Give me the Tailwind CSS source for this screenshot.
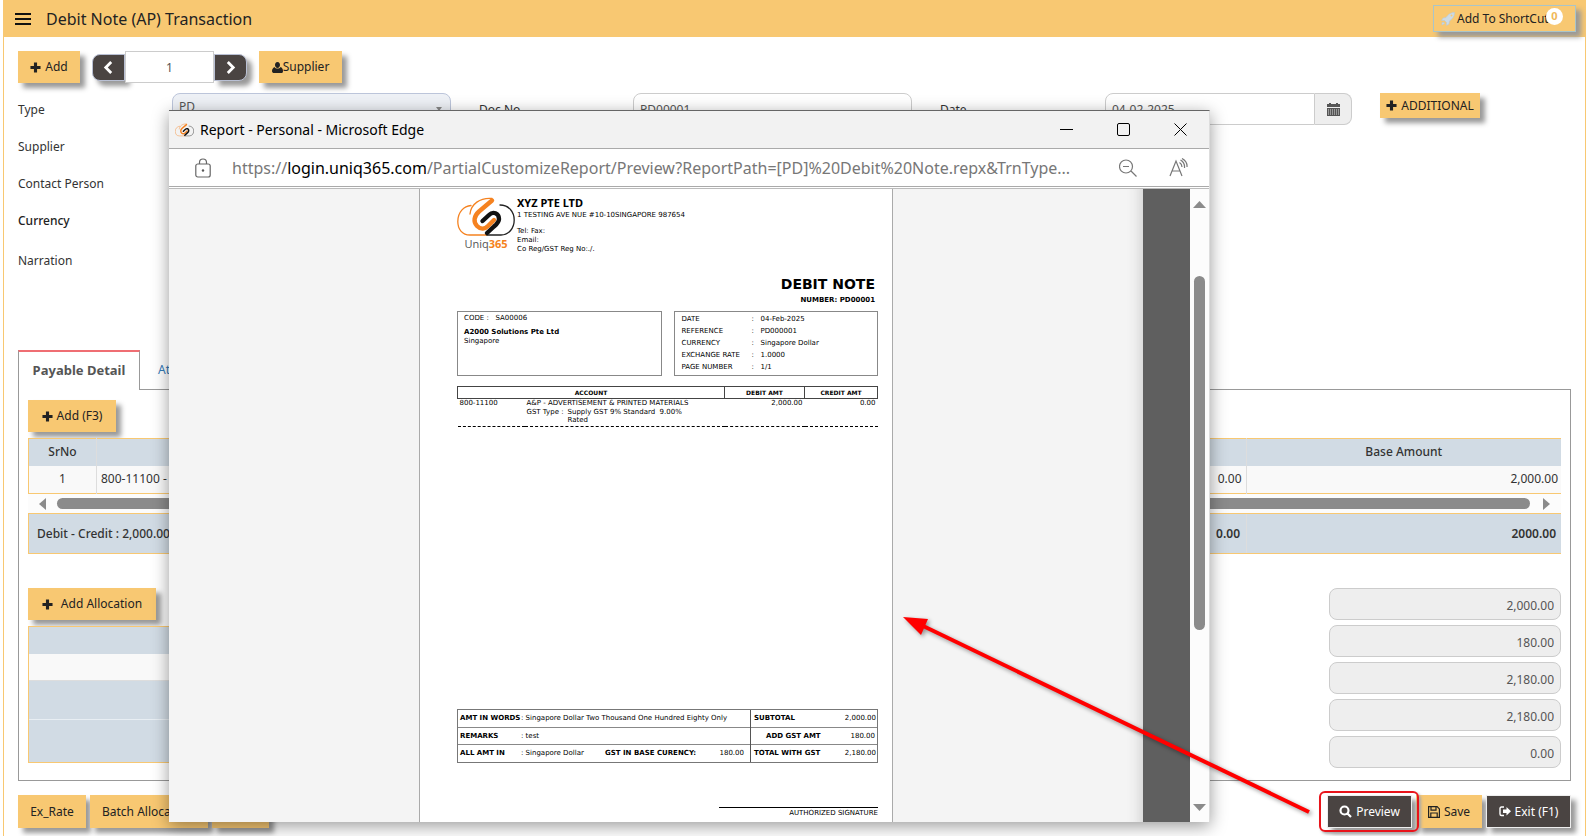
<!DOCTYPE html>
<html lang="en">
<head>
    <meta charset="UTF-8">
    <meta name="viewport" content="width=device-width, initial-scale=1.0">
    <title>Debit Note (AP) Transaction</title>
    <script src="https://cdn.jsdelivr.net/npm/@tailwindcss/browser@4"></script>
</head>
<body class="bg-white font-['Noto_Sans',sans-serif] text-[12px] text-[#333]">
    <!-- Shared icons -->
    <svg class="hidden" aria-hidden="true">
        <symbol id="plus" viewBox="0 0 12 12"><path fill="currentColor" d="M4.300.5h3.400v3.800h3.800v3.400h-3.800v3.800h-3.400v-3.800h-3.800v-3.400h3.800z"/></symbol>
        <symbol id="logo" viewBox="0 0 58 40">
            <g fill="none" stroke-linecap="round" stroke-linejoin="round">
                <path stroke="#f58220" stroke-width="1.300" d="M30 38H13C5 38 .8 32 .8 24.500C.8 15 7 9 14 8.500M13 17C14 7 23 .5 35 1.500"/>
                <path stroke="#222" stroke-width="1.300" d="M43 8C52 8 57.200 15 57.200 23S52 38 44 38H30"/>
                <path stroke="#f58220" stroke-width="4.400" d="M35 3.500L22 14.500C17 19 16 25 20 29C24 33 28 32 31 29L37 23"/>
                <path stroke="#111" stroke-width="4.400" d="M25.500 24L32 18C36 14 42 16 42 22C42 25 40 27 37 29.500L30 36"/>
            </g>
        </symbol>
    </svg>

    <div class="relative min-h-screen overflow-hidden pl-[3px] pr-1">
        <div class="min-h-screen border-x border-[#f8c872]">
            <header class="flex h-[37px] items-center bg-[#f8c872] pl-[11px] pr-[9px] text-[#222]">
                <button aria-label="Menu" class="flex w-4 flex-col gap-[3px]">
                    <span class="h-[2px] w-full bg-[#111]"></span>
                    <span class="h-[2px] w-full bg-[#111]"></span>
                    <span class="h-[2px] w-full bg-[#111]"></span>
                </button>
                <h1 class="ml-[15px] text-[16px]">Debit Note (AP) Transaction</h1>
                <button class="relative ml-auto flex h-[27px] w-[143px] items-center border border-[#a9c5c9] pl-[7px] shadow-[5px_5px_5px_#999]">
                    <svg class="mr-[2px] size-[14px]" viewBox="0 0 14 14"><path fill="#cddbe6" stroke="#b5c9d8" stroke-width=".6" d="M13.500.5C9 .5 7 3 5 5.500L2 6L.5 8.500L3.500 8.500L5.500 10.500L5.500 13.500L8 12L8.500 9C11 7 13.500 5 13.500.5zM1 10.500L3 10.500L3.500 11.500L1 13z"/><circle cx="10.500" cy="3.500" r="1" fill="#f8c872"/></svg>
                    Add To ShortCut
                    <span class="absolute right-[12px] top-[2px] flex size-[17px] items-center justify-center rounded-full bg-white text-[11px] font-bold text-[#f0b858]">0</span>
                </button>
            </header>

            <main class="px-[14px] pt-[14px]">
                <div class="flex items-center text-[#222]">
                    <button class="flex h-8 w-[62px] items-center justify-center gap-1 bg-[#f8c872] shadow-[5px_5px_5px_#999]"><svg class="size-[11px]"><use href="#plus"/></svg>Add</button>
                    <button aria-label="Previous" class="ml-3 flex h-[27px] w-[33px] items-center justify-center rounded-l-[8px] border border-[#b9c0d4] bg-[#4a4442] shadow-[5px_5px_5px_#999]"><svg class="size-[13px]" viewBox="0 0 12 12"><path fill="none" stroke="#fff" stroke-width="2.600" d="M8.500 1L3.500 6L8.500 11"/></svg></button>
                    <input aria-label="Page" value="1" class="relative h-8 w-[89px] border border-[#ccc] bg-white text-center text-[#555]">
                    <button aria-label="Next" class="flex h-[27px] w-[33px] items-center justify-center rounded-r-[8px] border border-[#b9c0d4] bg-[#4a4442] shadow-[5px_5px_5px_#999]"><svg class="size-[13px]" viewBox="0 0 12 12"><path fill="none" stroke="#fff" stroke-width="2.600" d="M3.500 1L8.500 6L3.500 11"/></svg></button>
                    <button class="ml-3 flex h-8 w-[83px] items-center justify-center bg-[#f8c872] shadow-[5px_5px_5px_#999]"><svg class="size-[11px]" viewBox="0 0 11 11"><path fill="#222" d="M5.500 0C7.300 0 8 1.500 8 3S7 6 5.500 6S3 4.500 3 3S3.700 0 5.500 0zM2.500 5C3.500 7 7.500 7 8.500 5C10 5.500 11 7 11 9S10 11 9 11H2C1 11 0 10.500 0 9S1 5.500 2.500 5z"/></svg>Supplier</button>
                </div>

                <div class="mt-[10px] flex h-8 items-center">
                    <label for="type" class="w-[154px] pt-[2px]">Type</label>
                    <select id="type" class="h-8 w-[279px] appearance-none rounded-[8px] border border-[#bcc5da] bg-[#eef1f6] px-[6px] pb-[4px] text-[#555]"><option>PD</option></select>
                    <svg class="-ml-4 size-2" viewBox="0 0 8 8"><path fill="#888" d="M1 2h6L4 6z"/></svg>
                    <label for="doc" class="ml-9 w-[154px] pt-[2px]">Doc No</label>
                    <input id="doc" value="PD00001" class="h-8 w-[279px] rounded-[8px] border border-[#ccc] px-[6px] text-[#555]">
                    <label for="date" class="ml-7 w-[165px] pt-[2px]">Date</label>
                    <input id="date" value="04-02-2025" class="h-8 w-[210px] rounded-l-[8px] border border-[#ccc] px-[6px] text-[#555]">
                    <button aria-label="Pick date" class="flex h-8 w-[37px] items-center justify-center rounded-r-[8px] border border-l-0 border-[#ccc] bg-[#eee]"><svg class="size-[13px]" viewBox="0 0 13 13"><path fill="#555" d="M0 1h2V0h2v1h5V0h2v1h2v3H0zM0 5h13v8H0z"/><path stroke="#ddd" stroke-dasharray="1 1" d="M1 7h11M1 9h11M1 11h11"/></svg></button>
                    <button class="ml-7 flex h-[25px] w-[100px] items-center justify-center gap-1 self-start bg-[#f8c872] text-[#222] shadow-[5px_5px_5px_#999]"><svg class="size-[11px]"><use href="#plus"/></svg>ADDITIONAL</button>
                </div>
                <div class="mt-[14px] flex flex-col gap-[21px]">
                    <p class="leading-4">Supplier</p>
                    <p class="leading-4">Contact Person</p>
                    <p class="leading-4 font-medium text-[#222]">Currency</p>
                    <p class="mt-[3px] leading-4">Narration</p>
                </div>

                <nav class="mt-[81px] flex h-[39px] items-stretch">
                    <a href="#" class="relative z-1 -mb-px flex w-[122px] items-center justify-center border-x border-t-2 border-x-[#999] border-t-[#ef6e73] bg-white text-[13px] font-bold text-[#555]">Payable Detail</a>
                    <a href="#" class="flex items-center px-[18px] text-[#337ab7]">Attachment</a>
                </nav>
                <section class="border border-[#999] px-[9px] pb-3 pt-[10px]">
                    <button class="flex h-8 w-[88px] items-center justify-center gap-1 bg-[#f8c872] text-[#222] shadow-[5px_5px_5px_#999]"><svg class="size-[11px]"><use href="#plus"/></svg>Add (F3)</button>
                    <table class="mt-[6px] w-full table-fixed border-collapse border border-r-0 border-[#f8c872]">
                        <colgroup><col class="w-[68px]"><col><col class="w-[120px]"><col class="w-[315px]"></colgroup>
                        <thead>
                            <tr class="h-[27px] bg-[#d1dbe4] font-medium">
                                <th class="border-r border-[#ddd] font-medium">SrNo</th><th></th><th class="border-r border-[#ddd]"></th><th class="font-medium">Base Amount</th>
                            </tr>
                        </thead>
                        <tbody>
                            <tr class="h-7 bg-[#f9f9f9]">
                                <td class="border-r border-[#ddd] text-center">1</td>
                                <td class="px-1">800-11100 - A&amp;P</td>
                                <td class="border-r border-[#ddd] pr-1 text-right">0.00</td>
                                <td class="pr-[3px] text-right">2,000.00</td>
                            </tr>
                        </tbody>
                    </table>
                    <div class="flex h-[19px] items-center bg-[#fcfcfc] px-[11px]">
                        <svg class="h-3 w-[7px]" viewBox="0 0 7 12"><path fill="#8b8b8b" d="M7 0v12L0 6z"/></svg>
                        <div class="ml-[11px] mr-[13px] h-[11px] flex-1 rounded-full bg-[#8b8b8b]"></div>
                        <svg class="h-3 w-[7px]" viewBox="0 0 7 12"><path fill="#8b8b8b" d="M0 0v12L7 6z"/></svg>
                    </div>
                    <div class="flex h-[41px] items-stretch border border-r-0 border-[#f8c872] bg-[#d1dbe4] font-semibold">
                        <div class="flex flex-1 items-center pl-2 font-medium">Debit - Credit : 2,000.00</div>
                        <div class="flex w-[120px] items-center justify-end border-r border-[#ddd] pr-[6px]">0.00</div>
                        <div class="flex w-[314px] items-center justify-end pr-[5px]">2000.00</div>
                    </div>

                    <div class="mt-[34px] flex justify-between">
                        <div class="flex-1">
                            <button class="flex h-8 w-[128px] items-center justify-center gap-2 bg-[#f8c872] text-[#222] shadow-[5px_5px_5px_#999]"><svg class="size-[11px]"><use href="#plus"/></svg>Add Allocation</button>
                            <div class="mt-[6px] w-[800px] border border-[#f8c872] bg-[#d1dbe4]">
                                <div class="h-[27px]"></div>
                                <div class="h-[27px] border-b border-[#ddd] bg-[#f9f9f9]"></div>
                                <div class="h-[39px] border-b border-[#e8eef3]"></div>
                                <div class="h-[42px]"></div>
                            </div>
                        </div>
                        <div class="flex flex-col gap-[5px]" id="totals"></div>
                    </div>
                </section>

                <footer class="mt-[14px] flex items-center text-[#222]">
                    <button class="h-[33px] w-[68px] bg-[#f8c872] shadow-[5px_5px_5px_#999]">Ex_Rate</button>
                    <button class="ml-1 h-[33px] w-[118px] bg-[#f8c872] pl-3 text-left shadow-[5px_5px_5px_#999]">Batch Allocation</button>
                    <button class="ml-1 h-[33px] w-[57px] bg-[#f8c872] shadow-[5px_5px_5px_#999]">Print</button>
                    <button class="relative ml-auto flex h-[33px] w-[85px] items-center justify-center gap-1 border border-[#eee] bg-[#4a4442] text-white shadow-[5px_5px_5px_#999]">
                        <svg class="size-[13px]" viewBox="0 0 13 13"><path fill="none" stroke="#fff" stroke-width="2.200" d="M8.500 8.500L12 12M9.500 5.500a4 4 0 1 1-8 0a4 4 0 1 1 8 0z"/></svg>Preview
                        <span class="absolute -left-[9px] -top-[5px] h-[41px] w-[100px] rounded-[6px] border-2 border-[#e8141b] shadow-[2px_2px_3px_#aaa]"></span>
                    </button>
                    <button class="ml-1 flex h-[33px] w-[66px] items-center justify-center gap-1 bg-[#f8c872] shadow-[5px_5px_5px_#999]"><svg class="size-3" viewBox="0 0 12 12"><path fill="none" stroke="#222" stroke-width="1.200" d="M.6.600h8.500l2.300 2.300v8.500H.6zM3 .6v3.500h5V.6M2.800 11.400V7h6.400v4.400"/></svg>Save</button>
                    <button class="ml-1 flex h-[33px] w-[85px] items-center justify-center gap-1 border border-[#eee] bg-[#4a4442] text-white shadow-[5px_5px_5px_#999]"><svg class="h-[11px] w-3" viewBox="0 0 12 11"><path fill="none" stroke="#fff" stroke-width="1.400" d="M5 1H2.500Q1 1 1 2.500V8Q1 9.500 2.500 9.500H5"/><path fill="#fff" d="M4 3.500h3.500V1L12 5.300L7.500 9.500V7H4z"/></svg>Exit (F1)</button>
                </footer>
            </main>
        </div>

        <!-- Report preview window -->
        <div class="absolute left-[169px] top-[110px] flex h-[712px] w-[1041px] flex-col border-r border-t border-r-[#ddd] border-t-[#666] bg-white text-black shadow-[0_4px_16px_rgba(0,0,0,0.4)]">
            <div class="flex h-[38px] shrink-0 items-center border-b border-[#aaa] bg-[#f2f2f2] pl-[6px] pr-[22px]">
                <svg class="h-4 w-[19px]"><use href="#logo"/></svg>
                <span class="ml-[6px] text-[14px]">Report - Personal - Microsoft Edge</span>
                <button aria-label="Minimize" class="ml-auto"><svg class="size-[13px]" viewBox="0 0 13 13"><path stroke="#000" d="M0 6.500h13"/></svg></button>
                <button aria-label="Maximize" class="ml-11"><svg class="size-[13px]" viewBox="0 0 13 13"><rect x=".5" y=".5" width="12" height="12" rx="1.500" fill="none" stroke="#000"/></svg></button>
                <button aria-label="Close" class="ml-11"><svg class="size-[13px]" viewBox="0 0 13 13"><path stroke="#000" d="M.5.5l12 12M12.500.5l-12 12"/></svg></button>
            </div>
            <div class="flex h-[38px] shrink-0 items-center border-b border-[#aaa] pl-[26px] pr-[21px] text-[#777]">
                <svg class="h-5 w-4" viewBox="0 0 16 20"><g fill="none" stroke="#666" stroke-width="1.200"><rect x=".8" y="6" width="14.400" height="13" rx="2"/><path d="M4.500 6V4.500a3.500 3.500 0 0 1 7 0V6"/></g><circle cx="8" cy="12.500" r="1.200" fill="#555"/></svg>
                <span class="ml-[21px] whitespace-nowrap text-[16px]">https://<span class="text-black">login.uniq365.com</span>/PartialCustomizeReport/Preview?ReportPath=[PD]%20Debit%20Note.repx&amp;TrnType...</span>
                <button aria-label="Zoom out" class="ml-auto"><svg class="size-[18px]" viewBox="0 0 18 18"><path fill="none" stroke="#777" stroke-width="1.200" d="M12 12l5.500 5.500M13.500 7.500a6.500 6.500 0 1 1-13 0a6.500 6.500 0 1 1 13 0zM4 7.500h6"/></svg></button>
                <button aria-label="Read aloud" class="ml-8"><svg class="size-[19px]" viewBox="0 0 19 19"><path fill="none" stroke="#777" stroke-width="1.200" d="M1 18L7 3L13 18M3 13h8M10.500 4.500Q13 6 13 9M11.500 2Q16 4.500 15.500 10M13 .5Q18.500 3.500 18 9"/></svg></button>
            </div>
            <div class="mt-px flex min-h-0 flex-1 border-t border-[#bbb]">
                <div class="flex-1 bg-[#f4f4f4] shadow-[inset_-16px_0_14px_-14px_#ccc]">
                    <article class="mx-auto flex h-full w-[474px] flex-col border-x border-[#aaa] bg-white pl-[37px] pr-[14px] pt-2 font-['DejaVu_Sans',sans-serif] text-[7px] leading-[9px]">
                        <div class="flex h-[72px] gap-[2px]">
                            <div class="w-[58px]">
                                <svg class="h-10 w-[58px]"><use href="#logo"/></svg>
                                <p class="text-center font-['Open_Sans',sans-serif] text-[11px] leading-[13px] text-[#555]">Uniq<b class="text-[#f58220]">365</b></p>
                            </div>
                            <div>
                                <p class="font-['Noto_Sans',sans-serif] text-[11px] font-bold leading-3">XYZ PTE LTD</p>
                                <p class="leading-3">1 TESTING AVE NUE #10-10SINGAPORE 987654</p>
                                <p class="mt-[6px]">Tel: Fax:</p>
                                <p>Email:</p>
                                <p>Co Reg/GST Reg No:./.</p>
                            </div>
                        </div>
                        <h2 class="mt-[6px] pr-[3px] text-right text-[14px] font-bold leading-[18px]">DEBIT NOTE</h2>
                        <p class="mt-[2px] pr-[3px] text-right font-bold leading-[10px]">NUMBER: PD00001</p>
                        <div class="mt-[6px] grid h-[65px] grid-cols-2 gap-3">
                            <div class="border border-[#888] px-[6px] pt-[2px]">
                                <p>CODE : &nbsp; SA00006</p>
                                <p class="mt-[5px] font-bold">A2000 Solutions Pte Ltd</p>
                                <p>Singapore</p>
                            </div>
                            <dl class="grid grid-cols-[70px_9px_1fr] content-evenly border border-[#888] px-[7px]">
                                <dt>DATE</dt><dd>:</dd><dd>04-Feb-2025</dd>
                                <dt>REFERENCE</dt><dd>:</dd><dd>PD000001</dd>
                                <dt>CURRENCY</dt><dd>:</dd><dd>Singapore Dollar</dd>
                                <dt>EXCHANGE RATE</dt><dd>:</dd><dd>1.0000</dd>
                                <dt>PAGE NUMBER</dt><dd>:</dd><dd>1/1</dd>
                            </dl>
                        </div>
                        <table class="mt-[10px] w-full table-fixed border-collapse">
                            <colgroup><col class="w-[67px]"><col><col class="w-[80px]"><col class="w-[73px]"></colgroup>
                            <thead>
                                <tr class="h-3 text-[6px] leading-2"><th colspan="2" class="border border-[#444]">ACCOUNT</th><th class="border border-[#444]">DEBIT AMT</th><th class="border border-[#444]">CREDIT AMT</th></tr>
                            </thead>
                            <tbody>
                                <tr class="border-b border-dashed border-black align-top">
                                    <td class="pl-[2px]">800-11100</td>
                                    <td class="pb-[2px] pl-[2px]">
                                        <p>A&amp;P - ADVERTISEMENT &amp; PRINTED MATERIALS</p>
                                        <div class="flex gap-1"><span>GST Type :</span><p class="leading-2">Supply GST 9% Standard &nbsp;9.00%<br>Rated</p></div>
                                    </td>
                                    <td class="pr-[2px] text-right">2,000.00</td>
                                    <td class="pr-[2px] text-right">0.00</td>
                                </tr>
                            </tbody>
                        </table>
                        <div class="mt-auto grid grid-cols-[1fr_126px] border border-[#777]">
                            <div class="border-r border-[#555]">
                                <div class="flex h-[18px] items-center border-b border-[#888] pl-[2px]"><b class="w-[61px] whitespace-nowrap">AMT IN WORDS</b><span>: Singapore Dollar Two Thousand One Hundred Eighty Only</span></div>
                                <div class="flex h-[17px] items-center border-b border-[#888] pl-[2px]"><b class="w-[61px]">REMARKS</b><span>: test</span></div>
                                <div class="flex h-[17px] items-center pl-[2px] pr-[6px]"><b class="w-[61px]">ALL AMT IN</b><span class="w-[84px]">: Singapore Dollar</span><b>GST IN BASE CURENCY:</b><span class="ml-auto">180.00</span></div>
                            </div>
                            <div>
                                <div class="flex h-[18px] items-center justify-between border-b border-[#888] pl-[3px] pr-px"><b>SUBTOTAL</b><span>2,000.00</span></div>
                                <div class="flex h-[17px] items-center justify-between border-b border-[#888] pl-[15px] pr-[2px]"><b>ADD GST AMT</b><span>180.00</span></div>
                                <div class="flex h-[17px] items-center justify-between pl-[3px] pr-px"><b>TOTAL WITH GST</b><span>2,180.00</span></div>
                            </div>
                        </div>
                        <p class="mb-1 ml-auto mt-11 w-[159px] border-t border-black pt-px text-right">AUTHORIZED SIGNATURE</p>
                    </article>
                </div>
                <div class="w-[47px] bg-[#5f5f5f]"></div>
                <div class="flex w-[19px] flex-col items-center bg-[#fcfcfc] pb-[11px] pt-3">
                    <svg class="h-[7px] w-[13px]" viewBox="0 0 13 7"><path fill="#8b8b8b" d="M0 7h13L6.500 0z"/></svg>
                    <div class="mt-[68px] h-[354px] w-[11px] rounded-full bg-[#8b8b8b]"></div>
                    <svg class="mt-auto h-[7px] w-[13px]" viewBox="0 0 13 7"><path fill="#8b8b8b" d="M0 0h13L6.500 7z"/></svg>
                </div>
            </div>
        </div>

        <!-- Arrow from the Preview button to the report -->
        <svg class="pointer-events-none absolute left-[895px] top-[605px] h-[220px] w-[425px] drop-shadow-[2px_2px_2px_rgba(0,0,0,0.4)]" viewBox="0 0 425 220">
            <path stroke="#f00" stroke-width="4" d="M24 19L414 207"/>
            <path fill="#f00" d="M8 12L33 14L26 30z"/>
        </svg>
    </div>

    <script>
        const totals = [
            ['Sub total', '2,000.00'],
            ['GST', '180.00'],
            ['Total', '2,180.00'],
            ['Base total', '2,180.00'],
            ['Allocated', '0.00']
        ];
        document.getElementById('totals').innerHTML = totals.map(([label, value]) => `
            <input aria-label="${label}" value="${value}" readonly
                class="h-8 w-[232px] rounded-[8px] border border-[#ccc] bg-[#eee] px-[6px] pt-[2px] text-right text-[#555]">
        `).join('');
    </script>
</body>
</html>
